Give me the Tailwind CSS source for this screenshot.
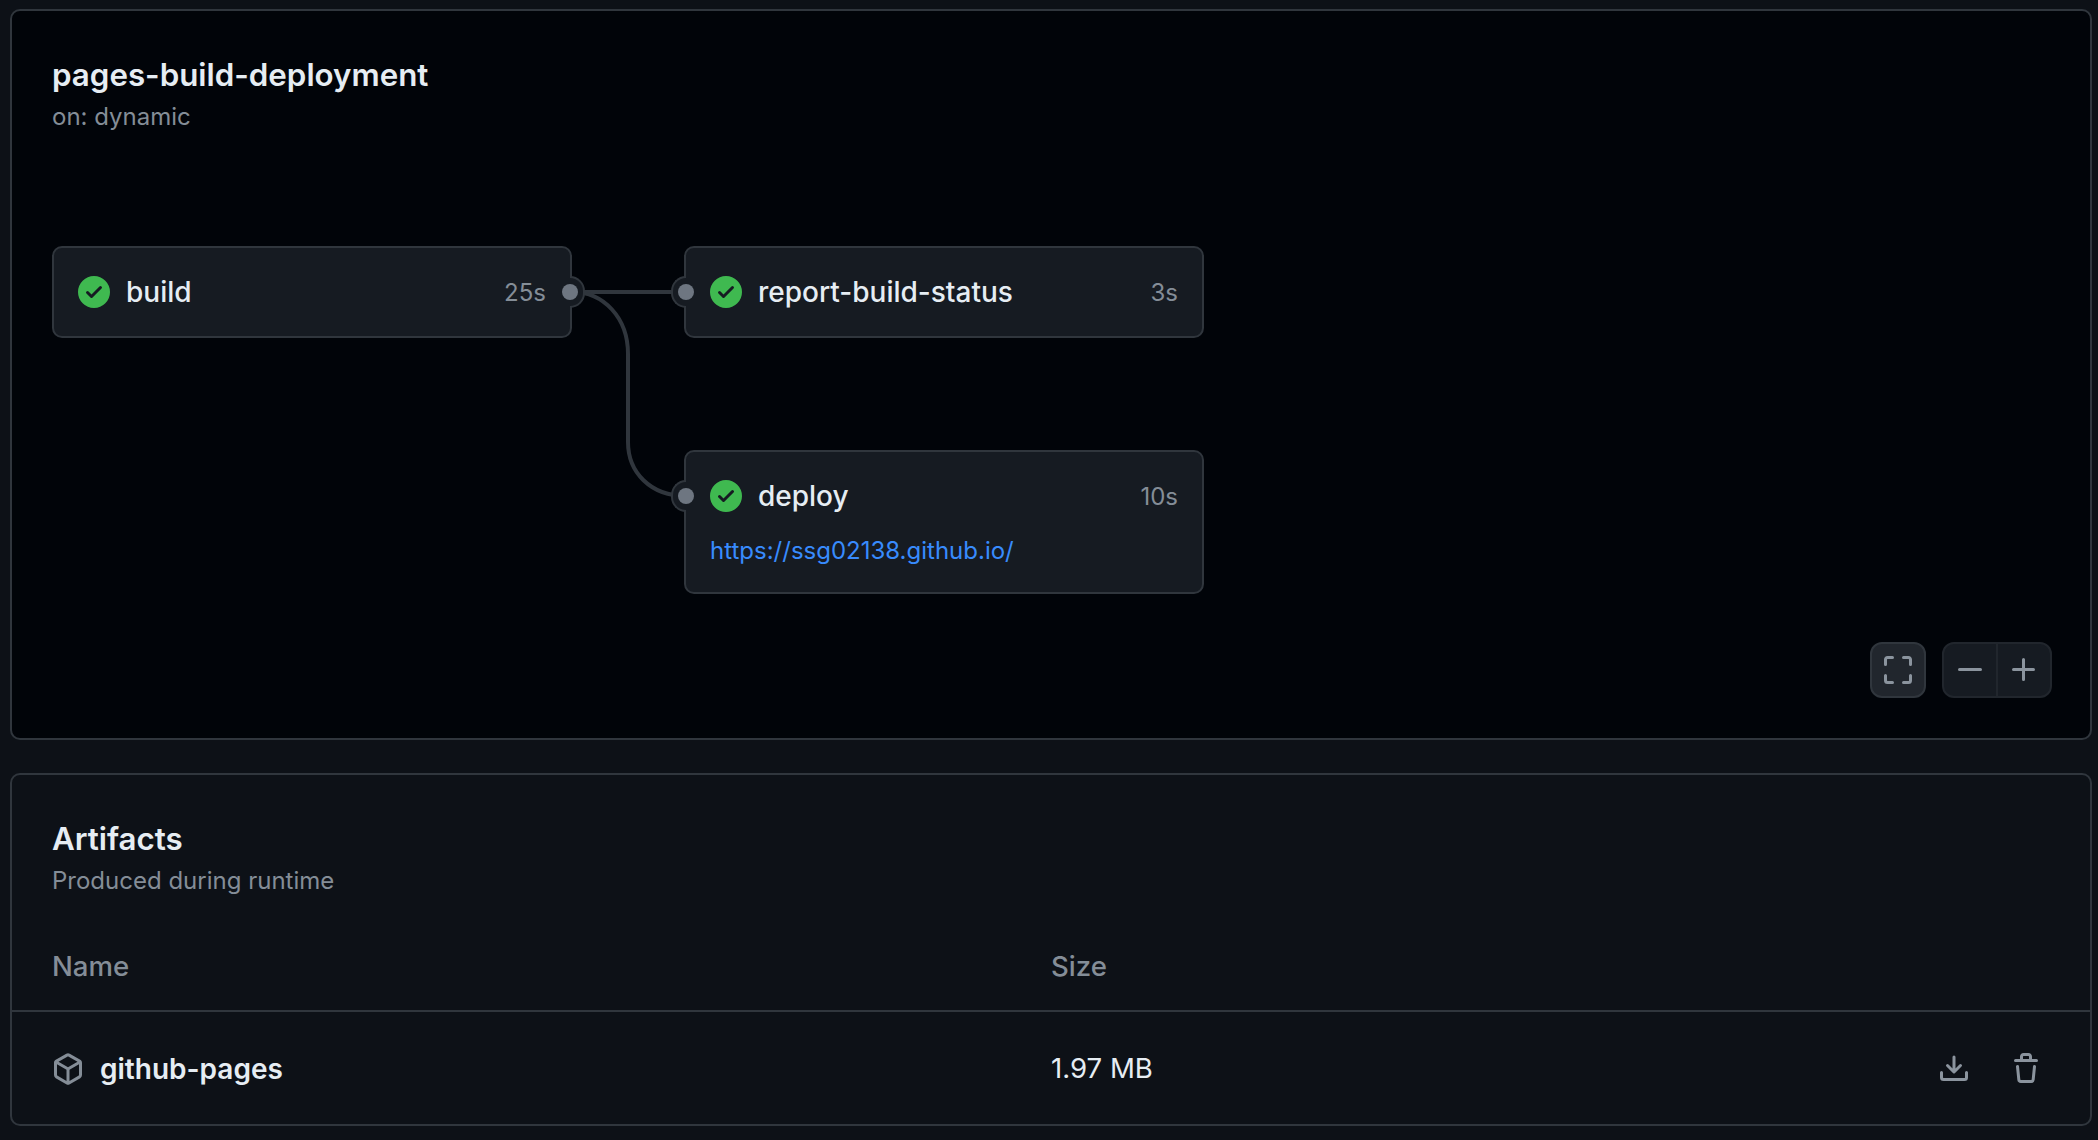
<!DOCTYPE html>
<html lang="en">

<head>
    <meta charset="UTF-8">
    <title>pages-build-deployment</title>
    <script src="https://cdn.jsdelivr.net/npm/@tailwindcss/browser@4"></script>
</head>

<body class="bg-[#0d1117] h-[1140px] overflow-hidden font-['Inter',sans-serif] text-[#e6edf3]">
    <div class="ml-[10px] mr-[6px] pt-[9px] flex flex-col gap-[33px]">

        <!-- workflow graph -->
        <section class="relative h-[731px] bg-[#010409] border-2 border-[#30363d] rounded-[10px] px-[40px] pt-[45px]">
            <h2 class="text-[31.3px] leading-[38px] font-semibold">pages-build-deployment</h2>
            <p class="text-[24px] leading-[32px] mt-[7px] text-[#848d97]">on: dynamic</p>

            <div class="relative mt-[113px] h-[348px]">
                <svg class="absolute left-0 top-0" width="800" height="300" fill="none" stroke="#30363d" stroke-width="4">
                    <path d="M520 46 H640" />
                    <path d="M520 46 C552 46 576 72 576 108 V196 C576 226 598 250 634 250" />
                </svg>

                <!-- build -->
                <div class="absolute left-0 top-0 w-[520px] h-[92px] bg-[#161b22] border-2 border-[#30363d] rounded-[10px] flex items-center px-[24px]">
                    <svg class="w-[32px] h-[32px] shrink-0" viewBox="0 0 16 16" fill="#3fb950"><path d="M8 16A8 8 0 1 1 8 0a8 8 0 0 1 0 16Zm3.78-9.72a.751.751 0 0 0-.018-1.042.751.751 0 0 0-1.042-.018L6.75 9.19 5.28 7.72a.751.751 0 0 0-1.042.018.751.751 0 0 0-.018 1.042l2 2a.75.75 0 0 0 1.06 0Z" /></svg>
                    <span class="ml-[16px] text-[28px] font-medium">build</span>
                    <span class="ml-auto mt-[2px] text-[24px] text-[#848d97]">25s</span>
                    <div class="absolute left-[100%] top-[28px] w-[15px] h-[32px] bg-[#161b22] border-2 border-l-0 border-[#30363d] rounded-r-full"></div>
                    <div class="absolute right-[-8px] top-[36px] w-[16px] h-[16px] rounded-full bg-[#6e7681]"></div>
                </div>

                <!-- report-build-status -->
                <div class="absolute left-[632px] top-0 w-[520px] h-[92px] bg-[#161b22] border-2 border-[#30363d] rounded-[10px] flex items-center px-[24px]">
                    <svg class="w-[32px] h-[32px] shrink-0" viewBox="0 0 16 16" fill="#3fb950"><path d="M8 16A8 8 0 1 1 8 0a8 8 0 0 1 0 16Zm3.78-9.72a.751.751 0 0 0-.018-1.042.751.751 0 0 0-1.042-.018L6.75 9.19 5.28 7.72a.751.751 0 0 0-1.042.018.751.751 0 0 0-.018 1.042l2 2a.75.75 0 0 0 1.06 0Z" /></svg>
                    <span class="ml-[16px] text-[28px] font-medium">report-build-status</span>
                    <span class="ml-auto mt-[2px] text-[24px] text-[#848d97]">3s</span>
                    <div class="absolute right-[100%] top-[28px] w-[15px] h-[32px] bg-[#161b22] border-2 border-r-0 border-[#30363d] rounded-l-full"></div>
                    <div class="absolute left-[-8px] top-[36px] w-[16px] h-[16px] rounded-full bg-[#6e7681]"></div>
                </div>

                <!-- deploy -->
                <div class="absolute left-[632px] top-[204px] w-[520px] h-[144px] bg-[#161b22] border-2 border-[#30363d] rounded-[10px] px-[24px]">
                    <div class="flex items-center h-[88px]">
                        <svg class="w-[32px] h-[32px] shrink-0" viewBox="0 0 16 16" fill="#3fb950"><path d="M8 16A8 8 0 1 1 8 0a8 8 0 0 1 0 16Zm3.78-9.72a.751.751 0 0 0-.018-1.042.751.751 0 0 0-1.042-.018L6.75 9.19 5.28 7.72a.751.751 0 0 0-1.042.018.751.751 0 0 0-.018 1.042l2 2a.75.75 0 0 0 1.06 0Z" /></svg>
                        <span class="ml-[16px] text-[28px] font-medium">deploy</span>
                        <span class="ml-auto mt-[2px] text-[24px] text-[#848d97]">10s</span>
                    </div>
                    <a class="block -mt-[5px] text-[24px] leading-[32px] text-[#388bfd]">https://ssg02138.github.io/</a>
                    <div class="absolute right-[100%] top-[28px] w-[15px] h-[32px] bg-[#161b22] border-2 border-r-0 border-[#30363d] rounded-l-full"></div>
                    <div class="absolute left-[-8px] top-[36px] w-[16px] h-[16px] rounded-full bg-[#6e7681]"></div>
                </div>
            </div>

            <!-- graph controls -->
            <div class="absolute right-[38px] bottom-[40px] flex gap-[16px]">
                <button class="w-[56px] h-[56px] flex items-center justify-center bg-[#21262d] border-2 border-[#30363d] rounded-[12px]">
                    <svg class="w-[32px] h-[32px]" viewBox="0 0 16 16" fill="#8b949e"><path d="M1.75 10a.75.75 0 0 1 .75.75v2.5c0 .138.112.25.25.25h2.5a.75.75 0 0 1 0 1.5h-2.5A1.75 1.75 0 0 1 1 13.25v-2.5a.75.75 0 0 1 .75-.75Zm12.5 0a.75.75 0 0 1 .75.75v2.5A1.75 1.75 0 0 1 13.25 15h-2.5a.75.75 0 0 1 0-1.5h2.5a.25.25 0 0 0 .25-.25v-2.5a.75.75 0 0 1 .75-.75ZM2.75 2.5a.25.25 0 0 0-.25.25v2.5a.75.75 0 0 1-1.5 0v-2.5C1 1.784 1.784 1 2.75 1h2.5a.75.75 0 0 1 0 1.5ZM10 1.75a.75.75 0 0 1 .75-.75h2.5c.966 0 1.75.784 1.75 1.75v2.5a.75.75 0 0 1-1.5 0v-2.5a.25.25 0 0 0-.25-.25h-2.5a.75.75 0 0 1-.75-.75Z" /></svg>
                </button>
                <div class="flex h-[56px] bg-[#161b22] border-2 border-[#21262d] rounded-[12px]">
                    <button class="w-[54px] flex items-center justify-center border-r-2 border-[#21262d]">
                        <svg class="w-[32px] h-[32px]" viewBox="0 0 16 16" fill="#8b949e"><path d="M2 7.75A.75.75 0 0 1 2.75 7h10.5a.75.75 0 0 1 0 1.5H2.75A.75.75 0 0 1 2 7.75Z" /></svg>
                    </button>
                    <button class="w-[52px] flex items-center justify-center">
                        <svg class="w-[32px] h-[32px]" viewBox="0 0 16 16" fill="#8b949e"><path d="M7.75 2a.75.75 0 0 1 .75.75V7h4.25a.75.75 0 0 1 0 1.5H8.5v4.25a.75.75 0 0 1-1.5 0V8.5H2.75a.75.75 0 0 1 0-1.5H7V2.75A.75.75 0 0 1 7.75 2Z" /></svg>
                    </button>
                </div>
            </div>
        </section>

        <!-- artifacts -->
        <section class="h-[353px] border-2 border-[#30363d] rounded-[10px]">
            <div class="px-[40px] pt-[44px]">
                <h2 class="text-[31.3px] leading-[40px] font-semibold">Artifacts</h2>
                <p class="text-[24px] leading-[32px] mt-[6px] text-[#848d97]">Produced during runtime</p>
            </div>
            <div class="grid grid-cols-[999px_1fr] px-[40px] h-[89px] items-center mt-[26px] border-b-2 border-[#30363d] text-[27.6px] font-medium text-[#848d97]">
                <span>Name</span>
                <span>Size</span>
            </div>
            <div class="grid grid-cols-[999px_1fr_auto] pl-[40px] pr-[48px] h-[113px] items-center">
                <div class="flex items-center">
                    <svg class="w-[32px] h-[32px] shrink-0" viewBox="0 0 16 16" fill="#848d97"><path d="m8.878.392 5.25 3.045c.54.314.872.89.872 1.514v6.098a1.75 1.75 0 0 1-.872 1.514l-5.25 3.045a1.75 1.75 0 0 1-1.756 0l-5.25-3.045A1.75 1.75 0 0 1 1 11.049V4.951c0-.624.332-1.201.872-1.514L7.122.392a1.75 1.75 0 0 1 1.756 0ZM7.875 1.69l-4.63 2.685L8 7.133l4.755-2.758-4.63-2.685a.248.248 0 0 0-.25 0ZM2.5 5.677v5.372c0 .09.047.171.125.216l4.625 2.683V8.432Zm6.25 8.271 4.625-2.683a.25.25 0 0 0 .125-.216V5.677L8.75 8.432Z" /></svg>
                    <span class="ml-[16px] text-[28px] font-semibold">github-pages</span>
                </div>
                <span class="text-[27.6px]">1.97 MB</span>
                <div class="flex items-center gap-[40px]">
                    <svg class="w-[32px] h-[32px]" viewBox="0 0 16 16" fill="#8b949e"><path d="M2.75 14A1.75 1.75 0 0 1 1 12.25v-2.5a.75.75 0 0 1 1.5 0v2.5c0 .138.112.25.25.25h10.5a.25.25 0 0 0 .25-.25v-2.5a.75.75 0 0 1 1.5 0v2.5A1.75 1.75 0 0 1 13.25 14Z" /><path d="M7.25 7.689V2a.75.75 0 0 1 1.5 0v5.689l1.97-1.969a.749.749 0 1 1 1.06 1.06l-3.25 3.25a.749.749 0 0 1-1.06 0L4.22 6.78a.749.749 0 1 1 1.06-1.06l1.97 1.969Z" /></svg>
                    <svg class="w-[32px] h-[32px]" viewBox="0 0 16 16" fill="#8b949e"><path d="M11 1.75V3h2.25a.75.75 0 0 1 0 1.5H2.75a.75.75 0 0 1 0-1.5H5V1.75C5 .784 5.784 0 6.75 0h2.5C10.216 0 11 .784 11 1.75ZM4.496 6.675l.66 6.6a.25.25 0 0 0 .249.225h5.19a.25.25 0 0 0 .249-.225l.66-6.6a.75.75 0 0 1 1.492.149l-.66 6.6A1.748 1.748 0 0 1 10.595 15h-5.19a1.75 1.75 0 0 1-1.741-1.575l-.66-6.6a.75.75 0 1 1 1.492-.15ZM6.5 1.75V3h3V1.75a.25.25 0 0 0-.25-.25h-2.5a.25.25 0 0 0-.25.25Z" /></svg>
                </div>
            </div>
        </section>
    </div>
</body>

</html>
